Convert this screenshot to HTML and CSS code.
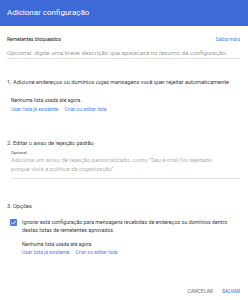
FILE: index.html
```html
<!DOCTYPE html>
<html lang="pt">
<head>
<meta charset="utf-8">
<link rel="stylesheet" href="styles.css">
</head>
<body>
<div class="dialog">
  <header class="header">Adicionar configuração</header>
  <main class="content">
    <div class="field-head">
      <span class="label">Remetentes bloqueados</span>
      <a class="link">Saiba mais</a>
    </div>
    <div class="input">Opcional: digite uma breve descrição que aparecerá no resumo da configuração.</div>

    <div class="section-title s1">1. Adicione endereços ou domínios cujas mensagens você quer rejeitar automaticamente</div>
    <div class="indent">
      <div class="note">Nenhuma lista usada até agora.</div>
      <div class="links"><a class="link">Usar lista já existente</a><a class="link">Criar ou editar lista</a></div>
    </div>

    <div class="section-title s2">2. Editar o aviso de rejeição padrão</div>
    <div class="indent">
      <div class="small-label">Opcional</div>
      <div class="textarea"><div class="ta-text">Adicione um aviso de rejeição personalizado, como "Seu e-mail foi rejeitado porque viola a política da organização".</div></div>
    </div>

    <div class="section-title s3">3. Opções</div>
    <div class="check-row">
      <span class="checkbox"><svg viewBox="0 0 10 10" width="7" height="7"><path d="M2 5.2 L4.1 7.2 L8 2.9" fill="none" stroke="#fff" stroke-width="1.4"/></svg></span>
      <div class="check-body">
        <div class="check-text">Ignorar esta configuração para mensagens recebidas de endereços ou domínios dentro destas listas de remetentes aprovados.</div>
        <div class="note n2">Nenhuma lista usada até agora.</div>
        <div class="links"><a class="link">Usar lista já existente</a><a class="link">Criar ou editar lista</a></div>
      </div>
    </div>
  </main>
  <footer class="footer">
    <span class="btn cancel">CANCELAR</span>
    <span class="btn save">SALVAR</span>
  </footer>
</div>
</body>
</html>
```
FILE: styles.css
```css
html, body {
  margin: 0;
  padding: 0;
  background: #fff;
}
body {
  font-family: Roboto, "Liberation Sans", sans-serif;
  width: 248px;
  height: 300px;
  overflow: hidden;
}
.dialog {
  display: flex;
  flex-direction: column;
  height: 300px;
}
.header {
  background: #3d6ad6;
  color: #fff;
  font-size: 8px;
  height: 26px;
  line-height: 26px;
  padding-left: 7px;
}
.content {
  padding: 0 8px 0 7px;
}
.field-head {
  display: flex;
  justify-content: space-between;
  align-items: center;
  margin-top: 8px;
  line-height: 10px;
  height: 10px;
}
.label {
  font-size: 5px;
  color: #212121;
}
.link {
  font-size: 5px;
  color: #4a85ef;
}
.input {
  margin-top: 4px;
  font-size: 6.2px;
  line-height: 10px;
  color: #9e9e9e;
  border-bottom: 1px solid #e0e0e0;
  white-space: nowrap;
}
.section-title {
  font-size: 5.6px;
  line-height: 8px;
  color: #3c4043;
  white-space: nowrap;
}
.s1 { margin-top: 19px; }
.s2 { margin-top: 26px; }
.s3 { margin-top: 23px; }
.indent {
  padding-left: 4px;
}
.note {
  font-size: 5px;
  line-height: 8px;
  color: #3c4043;
  margin-top: 10px;
}
.links {
  display: flex;
  gap: 6px;
  line-height: 8px;
  margin-top: 1px;
}
.small-label {
  font-size: 4px;
  line-height: 5px;
  color: #3c4043;
  margin-top: 2.5px;
}
.textarea {
  padding-bottom: 5px;
  border-bottom: 1px solid #e0e0e0;
}
.ta-text {
  font-size: 6px;
  line-height: 9px;
  color: #b0b0b0;
  max-width: 214px;
}
.check-row {
  display: flex;
  margin-top: 8px;
  padding-left: 3px;
  gap: 5px;
}
.checkbox {
  flex: none;
  width: 7px;
  height: 7px;
  margin-top: 1px;
  background: #4a80ea;
  border-radius: 1px;
  display: flex;
}
.check-body {
  flex: 1;
}
.check-text {
  font-size: 5.3px;
  line-height: 8px;
  color: #3c4043;
}
.n2 {
  margin-top: 6px;
}
.n2 + .links {
  margin-top: 0;
}
.footer {
  margin-top: auto;
  display: flex;
  justify-content: flex-end;
  gap: 9px;
  padding: 0 8px 5px 0;
  line-height: 8px;
}
.btn {
  font-size: 5px;
  font-weight: 500;
}
.cancel { color: #8a8a8a; }
.save { color: #4a85ef; }
```
